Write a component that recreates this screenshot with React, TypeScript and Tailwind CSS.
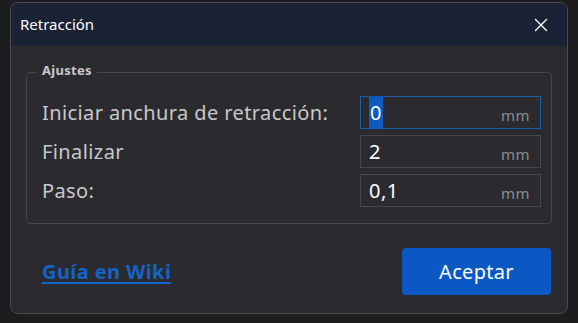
import { X } from "lucide-react";

const FONT = { fontFamily: '"Noto Sans", "Open Sans", sans-serif' };

function Field({ value, focused }: { value: string; focused?: boolean }) {
  return (
    <div
      className={`flex h-[33px] w-[181px] items-center justify-between pl-[8px] pr-[10px] ${
        focused ? "border border-[#1f5fa6]" : "border border-[#48484c]"
      }`}
    >
      <span className="text-[20px] leading-none tracking-[0.5px] text-white">
        {focused ? <span className="bg-[#0d5bbf] px-[1px] py-[3px]">{value}</span> : value}
      </span>
      <span className="mt-[6px] text-[15px] leading-none tracking-[0.5px] text-[#8c8c90]">mm</span>
    </div>
  );
}

export default function App() {
  return (
    <div
      className="h-[323px] w-[578px] overflow-hidden bg-[#1d1d20] pt-[2px] pl-[10px]"
      style={FONT}
    >
      <div className="flex h-[312px] w-[558px] flex-col overflow-hidden rounded-[8px] border border-[#4a4a4f] bg-[#2b2b2f]">
        <div className="flex h-[43px] items-center justify-between bg-[#1a2236] pl-[9px] pr-[15px]">
          <span className="text-[15px] text-white">Retracción</span>
          <X className="h-[22px] w-[22px] text-white" strokeWidth={1.5} />
        </div>

        <div className="relative mx-[15px] mt-[26px] h-[152px] rounded-[4px] border border-[#46464b]">
          <span className="absolute -top-[12px] left-[10px] bg-[#2b2b2f] px-[5px] text-[13px] font-bold leading-[18px] tracking-[0.3px] text-[#c8c8cc]">
            Ajustes
          </span>
          <div className="flex flex-col gap-[6px] pt-[23px] pl-[15px] pr-[10px]">
            <div className="flex items-center justify-between">
              <span className="text-[20px] tracking-[0.4px] text-[#c8c8cc]">
                Iniciar anchura de retracción:
              </span>
              <Field value="0" focused />
            </div>
            <div className="flex items-center justify-between">
              <span className="text-[20px] tracking-[0.4px] text-[#c8c8cc]">Finalizar</span>
              <Field value="2" />
            </div>
            <div className="flex items-center justify-between">
              <span className="text-[20px] tracking-[0.4px] text-[#c8c8cc]">Paso:</span>
              <Field value="0,1" />
            </div>
          </div>
        </div>

        <div className="mt-[24px] flex items-center justify-between pl-[31px] pr-[16px]">
          <a className="text-[20px] font-bold tracking-[0.4px] text-[#1463c6] underline underline-offset-[3px]">
            Guía en Wiki
          </a>
          <button className="flex h-[47px] w-[149px] items-center justify-center rounded-[4px] bg-[#0b58c4] text-[20px] tracking-[0.3px] text-white">
            Aceptar
          </button>
        </div>
      </div>
    </div>
  );
}
